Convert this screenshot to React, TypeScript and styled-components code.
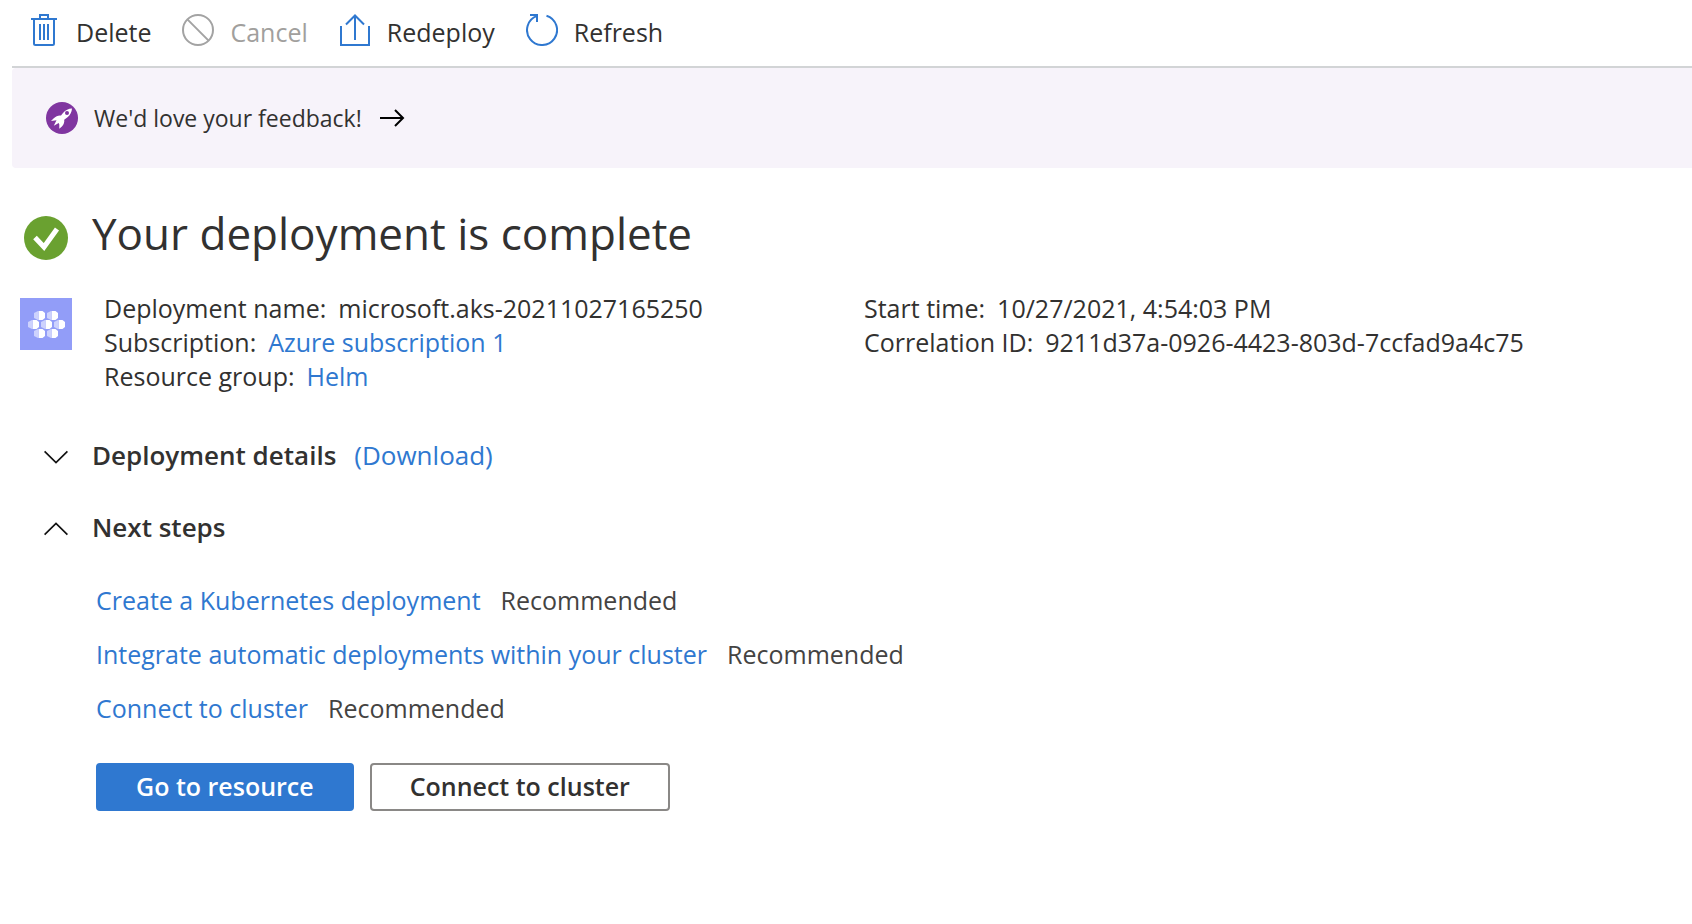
import React from "react";
import styled, { createGlobalStyle } from "styled-components";

const GlobalStyle = createGlobalStyle`
  *, *::before, *::after { box-sizing: border-box; }
  body {
    margin: 0;
    background: #fff;
    color: #323130;
    font-family: "Open Sans", "Noto Sans", sans-serif;
    font-size: 25px;
    line-height: 34px;
  }
  h1, dl, dd, ul { margin: 0; padding: 0; }
  button { font: inherit; color: inherit; cursor: pointer; }
  svg { display: block; flex: none; }
`;

const Page = styled.div`
  padding-left: 12px;
`;

const Toolbar = styled.div`
  display: flex;
  gap: 31px;
  height: 68px;
  padding: 14px 16px 0;
  border-bottom: 2px solid #d2d4d6;
`;

const ToolButton = styled.button`
  display: flex;
  align-items: flex-start;
  gap: 16px;
  height: 36px;
  padding: 0;
  border: 0;
  background: none;
  line-height: 36px;
  white-space: nowrap;

  &:disabled { color: #a19f9d; cursor: default; }
`;

const Feedback = styled.a`
  display: flex;
  align-items: center;
  gap: 16px;
  height: 100px;
  padding: 0 34px;
  border-radius: 4px 0 0 4px;
  background: #f7f3fa;
  color: inherit;
  font-size: 23px;
  text-decoration: none;
`;

const Main = styled.main`
  padding: 34px 68px 40px 0;
`;

const Heading = styled.div`
  display: flex;
  align-items: flex-start;
  gap: 24px;
  padding-left: 12px;
`;

const StatusIcon = styled.svg`
  margin-top: 14px;
`;

const Title = styled.h1`
  font-size: 44px;
  font-weight: 400;
  line-height: 62px;
`;

const Summary = styled.section`
  display: flex;
  gap: 32px;
  margin-top: 27px;
  padding-left: 8px;
`;

const ResourceIcon = styled.svg`
  margin-top: 7px;
`;

const Facts = styled.div`
  flex: 1;
  display: grid;
  grid-template-columns: 1fr 1fr;
`;

const FactList = styled.dl`
  white-space: nowrap;
`;

const Fact = styled.div`
  display: flex;
  gap: 12px;
`;

const Link = styled.a`
  color: #2f78d0;
  text-decoration: none;
`;

const SectionHead = styled.div<{ $gap: number }>`
  display: flex;
  align-items: center;
  gap: 18px;
  height: 36px;
  margin-top: ${(p) => p.$gap}px;
  padding-left: 32px;
  font-size: 26px;
`;

const SectionToggle = styled.button`
  display: flex;
  align-items: center;
  gap: 24px;
  padding: 0;
  border: 0;
  background: none;
  font-weight: 600;
`;

const ChevronIcon = styled.svg`
  margin-top: 4px;
`;

const Steps = styled.ul`
  display: grid;
  gap: 20px;
  margin-top: 38px;
  padding-left: 84px;
  list-style: none;
`;

const Step = styled.li`
  display: flex;
  gap: 20px;
`;

const Note = styled.span`
  color: #444342;
`;

const Actions = styled.div`
  display: flex;
  gap: 16px;
  margin-top: 38px;
  padding-left: 84px;
`;

const ActionButton = styled.button<{ $primary?: boolean }>`
  height: 48px;
  padding: 0 38px 2px;
  border: 2px solid ${(p) => (p.$primary ? "#2f78d0" : "#8a8886")};
  border-radius: 4px;
  background: ${(p) => (p.$primary ? "#2f78d0" : "#fff")};
  color: ${(p) => (p.$primary ? "#fff" : "#323130")};
  font-weight: 600;
  line-height: 42px;
`;

const ToolIcon = ({ color = "#2f78d0", children }: { color?: string; children: React.ReactNode }) => (
  <svg width="32" height="32" viewBox="0 0 32 32" fill="none" stroke={color} strokeWidth="2" aria-hidden="true">
    {children}
  </svg>
);

const Chevron = ({ up }: { up?: boolean }) => (
  <ChevronIcon width="24" height="14" viewBox="0 0 24 14" fill="none" stroke="#111" strokeWidth="1.7" aria-hidden="true">
    <path d={up ? "M.6 12.6 12 1.4l11.4 11.2" : "M.6 1.4 12 12.6 23.4 1.4"} />
  </ChevronIcon>
);

const PODS: [number, number][] = [
  [14, 13], [27, 13], [8, 22], [21, 22], [34, 22], [14, 31], [27, 31],
];

const steps = ["Create a Kubernetes deployment", "Integrate automatic deployments within your cluster", "Connect to cluster"];

export default function App() {
  return (
    <>
      <GlobalStyle />
      <Page>
        <Toolbar role="toolbar" aria-label="Deployment actions">
          <ToolButton type="button">
            <ToolIcon>
              <path d="M6 6v23.5q0 1.5 1.500 1.500h17q1.500 0 1.500-1.500V6M3 5h26M12 5V1h8v4M12 10v16M16 10v16M20 10v16" />
            </ToolIcon>
            Delete
          </ToolButton>
          <ToolButton type="button" disabled>
            <ToolIcon color="#a3a3a3">
              <circle cx="16" cy="16" r="15" />
              <path d="m5.400 5.400 21.200 21.200" />
            </ToolIcon>
            Cancel
          </ToolButton>
          <ToolButton type="button">
            <ToolIcon>
              <path d="M2 12v19h28V12M16 26V2M7 10.500l9-9 9 9" />
            </ToolIcon>
            Redeploy
          </ToolButton>
          <ToolButton type="button">
            <ToolIcon>
              <path d="M20.500 1.700A15 15 0 1 1 11 1.900M4 1h7v7" />
            </ToolIcon>
            Refresh
          </ToolButton>
        </Toolbar>
        <Feedback href="#feedback">
          <svg width="32" height="32" viewBox="0 0 32 32" aria-hidden="true">
            <circle cx="16" cy="16" r="16" fill="#8035a0" />
            <path
              fill="#fff"
              d="M26 6.500c-3.500 0-6.500 1.500-9 4.500l-2 2.600c-2.800-.3-5 .6-7.500 2.900L5 19l5.500-.7-2.700 5.400 4.900-2.700.6 1.600 0 4.200 2.600-2.200c1.900-2 2.700-4.300 2.300-6.800l3.300-2.500c2.800-2.400 4.300-5.300 4.500-8.800Z"
            />
            <circle cx="21" cy="11" r="2" fill="#8035a0" />
          </svg>
          We'd love your feedback!
          <svg width="28" height="18" viewBox="0 0 28 18" fill="none" stroke="#000" strokeWidth="2" aria-hidden="true">
            <path d="M2 9h23M17 1l8 8-8 8" />
          </svg>
        </Feedback>
        <Main>
          <Heading>
            <StatusIcon width="44" height="44" viewBox="0 0 44 44" role="img" aria-label="Succeeded">
              <circle cx="22" cy="22" r="22" fill="#6aa130" />
              <path d="m11 21.500 9 9.500L33 13" fill="none" stroke="#fff" strokeWidth="5" />
            </StatusIcon>
            <Title>Your deployment is complete</Title>
          </Heading>
          <Summary>
            <ResourceIcon width="52" height="52" viewBox="0 0 52 52" aria-hidden="true">
              <path fill="#929df8" d="M0 0h52v52H0z" />
              {PODS.map(([x, y]) => (
                <g key={`${x}-${y}`}>
                  <path fill="#cdd2fd" d={`M${x} ${y + 2}l4-2v9l-4-2z`} />
                  <path fill="#fff" d={`M${x + 4.500} ${y}h4l2.500 2v5l-2.500 2h-4z`} />
                </g>
              ))}
            </ResourceIcon>
            <Facts>
              <FactList>
                <Fact><dt>Deployment name:</dt><dd>microsoft.aks-20211027165250</dd></Fact>
                <Fact><dt>Subscription:</dt><dd><Link href="#subscription">Azure subscription 1</Link></dd></Fact>
                <Fact><dt>Resource group:</dt><dd><Link href="#group">Helm</Link></dd></Fact>
              </FactList>
              <FactList>
                <Fact><dt>Start time:</dt><dd>10/27/2021, 4:54:03 PM</dd></Fact>
                <Fact><dt>Correlation ID:</dt><dd>9211d37a-0926-4423-803d-7ccfad9a4c75</dd></Fact>
              </FactList>
            </Facts>
          </Summary>
          <SectionHead $gap={44}>
            <SectionToggle type="button" aria-expanded="false"><Chevron />Deployment details</SectionToggle>
            <Link href="#download">(Download)</Link>
          </SectionHead>
          <SectionHead $gap={36}>
            <SectionToggle type="button" aria-expanded="true"><Chevron up />Next steps</SectionToggle>
          </SectionHead>
          <Steps>
            {steps.map((step) => (
              <Step key={step}><Link href="#step">{step}</Link><Note>Recommended</Note></Step>
            ))}
          </Steps>
          <Actions>
            <ActionButton type="button" $primary>Go to resource</ActionButton>
            <ActionButton type="button">Connect to cluster</ActionButton>
          </Actions>
        </Main>
      </Page>
    </>
  );
}
